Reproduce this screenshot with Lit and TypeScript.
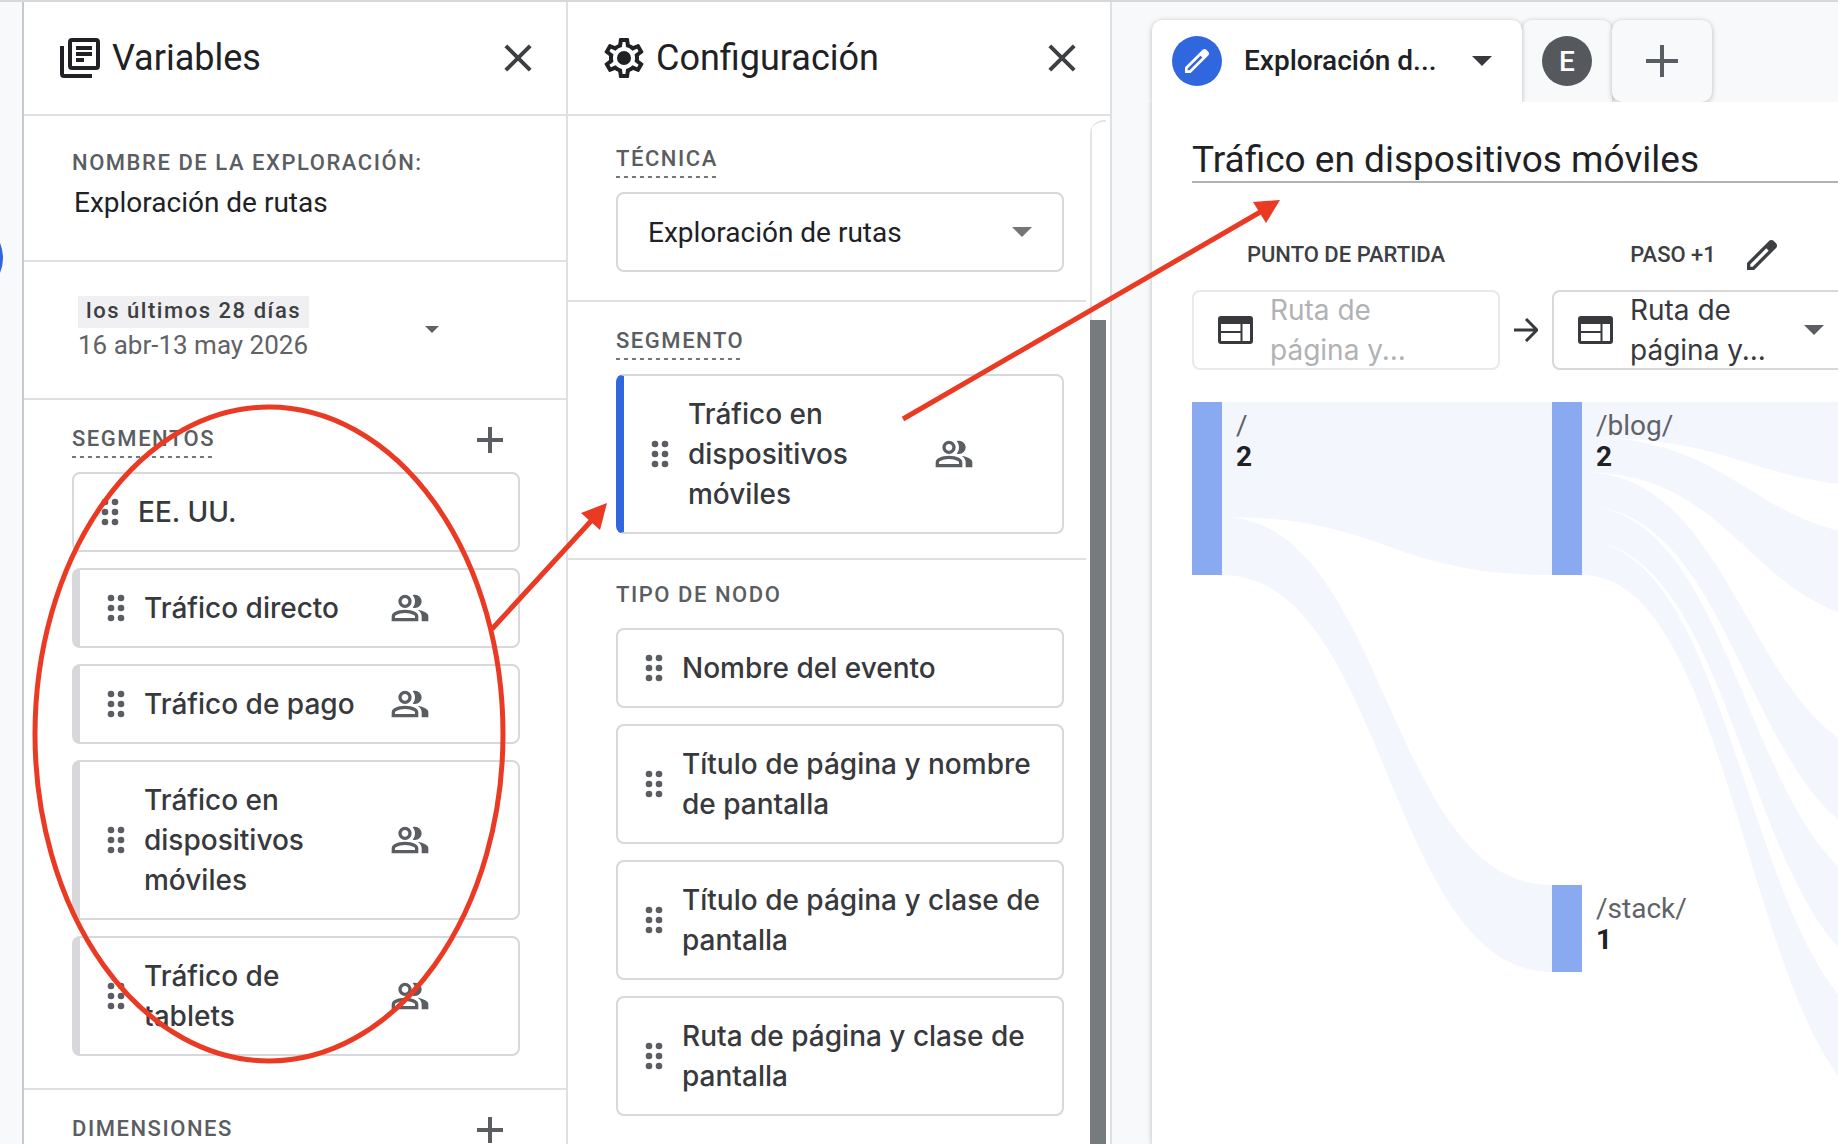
import { LitElement, html, svg, css, nothing, type TemplateResult } from "lit";
import { customElement } from "lit/decorators.js";
import { classMap } from "lit/directives/class-map.js";

interface Segment {
  name: string;
  audience: boolean;
}

interface SankeyNode {
  x: number;
  y: number;
  height: number;
  path: string;
  count: number;
}

/** One ribbon: horizontal span, then top and bottom edge at each end. */
interface SankeyLink {
  x0: number;
  x1: number;
  from: [number, number];
  to: [number, number];
}

const SEGMENTS: Segment[] = [
  { name: "EE. UU.", audience: false },
  { name: "Tráfico directo", audience: true },
  { name: "Tráfico de pago", audience: true },
  { name: "Tráfico en dispositivos móviles", audience: true },
  { name: "Tráfico de tablets", audience: true },
];

const NODE_TYPES = [
  "Nombre del evento",
  "Título de página y nombre de pantalla",
  "Título de página y clase de pantalla",
  "Ruta de página y clase de pantalla",
];

const NODES: SankeyNode[] = [
  { x: 0, y: 0, height: 173, path: "/", count: 2 },
  { x: 360, y: 0, height: 173, path: "/blog/", count: 2 },
  { x: 360, y: 483, height: 87, path: "/stack/", count: 1 },
];

const LINKS: SankeyLink[] = [
  { x0: 30, x1: 360, from: [0, 115], to: [0, 173] },
  { x0: 30, x1: 360, from: [115, 173], to: [483, 570] },
  { x0: 390, x1: 720, from: [0, 35], to: [0, 86] },
  { x0: 390, x1: 720, from: [35, 70], to: [137, 223] },
  { x0: 390, x1: 720, from: [70, 104], to: [360, 446] },
  { x0: 390, x1: 720, from: [104, 139], to: [497, 582] },
  { x0: 390, x1: 720, from: [139, 173], to: [633, 719] },
];

const ribbon = ({ x0, x1, from, to }: SankeyLink): string => {
  const mid = (x0 + x1) / 2;
  return (
    `M${x0} ${from[0]}C${mid} ${from[0]} ${mid} ${to[0]} ${x1} ${to[0]}` +
    `V${to[1]}C${mid} ${to[1]} ${mid} ${from[1]} ${x0} ${from[1]}Z`
  );
};

const libraryIcon = html`<svg class="icon48" viewBox="0 0 24 24" aria-hidden="true">
  <rect x="7" y="3" width="14" height="14" rx="1" fill="none" stroke="currentColor" stroke-width="2"></rect>
  <path d="M3 6V20a1 1 0 0 0 1 1H18" fill="none" stroke="currentColor" stroke-width="2"></path>
  <path d="M10 6h8v2h-8zM10 9h8v2h-8zM10 12h4v2h-4z"></path>
</svg>`;

const gearIcon = html`<svg class="icon48" viewBox="0 0 24 24" aria-hidden="true">
  <path
    d="M19.43 12.98c.04-.32.07-.64.07-.98 0-.34-.03-.66-.07-.98l2.11-1.65c.19-.15.24-.42.12-.64l-2-3.46c-.09-.16-.26-.25-.44-.25-.06 0-.12.01-.17.03l-2.49 1c-.52-.4-1.08-.73-1.69-.98l-.38-2.65C14.46 2.18 14.25 2 14 2h-4c-.25 0-.46.18-.49.42l-.38 2.65c-.61.25-1.17.59-1.69.98l-2.49-1c-.06-.02-.12-.03-.18-.03-.17 0-.34.09-.43.25l-2 3.46c-.13.22-.07.49.12.64l2.11 1.65c-.04.32-.07.65-.07.98 0 .33.03.66.07.98l-2.11 1.65c-.19.15-.24.42-.12.64l2 3.46c.09.16.26.25.44.25.06 0 .12-.01.17-.03l2.49-1c.52.4 1.08.73 1.69.98l.38 2.65c.03.24.24.42.49.42h4c.25 0 .46-.18.49-.42l.38-2.65c.61-.25 1.17-.59 1.69-.98l2.49 1c.06.02.12.03.18.03.17 0 .34-.09.43-.25l2-3.46c.12-.22.07-.49-.12-.64l-2.11-1.65zm-1.98-1.71c.04.31.05.52.05.73 0 .21-.02.43-.05.73l-.14 1.13.89.7 1.08.84-.7 1.21-1.27-.51-1.04-.42-.9.68c-.43.32-.84.56-1.25.73l-1.06.43-.16 1.13-.2 1.35h-1.4l-.19-1.35-.16-1.13-1.06-.43c-.43-.18-.83-.41-1.23-.71l-.91-.7-1.06.43-1.27.51-.7-1.21 1.08-.84.89-.7-.14-1.13c-.03-.31-.05-.54-.05-.74s.02-.43.05-.73l.14-1.13-.89-.7-1.08-.84.7-1.21 1.27.51 1.04.42.9-.68c.43-.32.84-.56 1.25-.73l1.06-.43.16-1.13.2-1.35h1.39l.19 1.35.16 1.13 1.06.43c.43.18.83.41 1.23.71l.91.7 1.06-.43 1.27-.51.7 1.21-1.07.85-.89.7.14 1.13z"
  ></path>
  <circle cx="12" cy="12" r="3.5"></circle>
</svg>`;

const closeIcon = html`<svg class="icon48" viewBox="0 0 24 24" aria-hidden="true">
  <path d="M5.9 5.9 18.1 18.1M18.1 5.9 5.9 18.1" fill="none" stroke="currentColor" stroke-width="2"></path>
</svg>`;

const plusIcon = html`<svg class="icon48" viewBox="0 0 48 48" aria-hidden="true">
  <path d="M24 11V37M11 24H37" fill="none" stroke="currentColor" stroke-width="4"></path>
</svg>`;

const plusLargeIcon = html`<svg class="icon48" viewBox="0 0 48 48" aria-hidden="true">
  <path d="M24 8V40M8 24H40" fill="none" stroke="currentColor" stroke-width="4"></path>
</svg>`;

const dragIcon = html`<svg class="icon40" viewBox="0 0 24 24" aria-hidden="true">
  ${[6, 12, 18].map(
    (y) => svg`<circle cx="9" cy=${y} r="2"></circle><circle cx="15" cy=${y} r="2"></circle>`,
  )}
</svg>`;

const peopleIcon = html`<svg class="icon40" viewBox="0 -960 960 960" aria-hidden="true">
  <path
    d="M40-160v-112q0-34 17.5-62.5T104-378q62-31 126-46.5T360-440q66 0 130 15.5T616-378q29 15 46.5 43.5T680-272v112H40Zm720 0v-120q0-44-24.5-84.5T666-434q51 6 96 20.5t84 35.5q36 20 55 44.5t19 53.5v120H760ZM360-480q-66 0-113-47t-47-113q0-66 47-113t113-47q66 0 113 47t47 113q0 66-47 113t-113 47Zm400-160q0 66-47 113t-113 47q-11 0-28-2.5t-28-5.5q27-32 41.5-71t14.5-81q0-42-14.5-81T544-792q14-5 28-6.5t28-1.5q66 0 113 47t47 113ZM120-240h480v-32q0-11-5.5-20T580-306q-54-27-109-40.5T360-360q-56 0-111 13.5T140-306q-9 5-14.5 14t-5.5 20v32Zm240-320q33 0 56.5-23.5T440-640q0-33-23.5-56.5T360-720q-33 0-56.5 23.5T280-640q0 33 23.5 56.5T360-560Z"
  ></path>
</svg>`;

const pencil = svg`<path d="M5 19h1.4l9.600-9.600-1.400-1.400L5 17.600zM3 21v-4.250L16.200 3.580q.3-.28.66-.43t.76-.15.780.15.650.45L20.430 5q.29.28.43.650T21 6.400q0 .4-.14.760t-.43.670L7.250 21z"></path>`;

const webIcon = html`<svg class="web-icon" viewBox="0 0 36 28" aria-hidden="true">
  <path
    fill-rule="evenodd"
    d="M3 0H32a3 3 0 0 1 3 3V25a3 3 0 0 1-3 3H3a3 3 0 0 1-3-3V3A3 3 0 0 1 3 0ZM3 8V15H22.500V8ZM3 17V25H22.500V17ZM24.500 8V25H32V8Z"
  ></path>
</svg>`;

const arrowIcon = html`<svg class="arrow" viewBox="0 0 24 24" aria-hidden="true">
  <path d="M0 12H22M12 1 23 12 12 23" fill="none" stroke="currentColor" stroke-width="3"></path>
</svg>`;

const caret = (size: "small" | "large"): TemplateResult => html`<svg
  class=${`caret ${size}`}
  viewBox="0 0 20 10"
  aria-hidden="true"
>
  <path d="M0 0H20L10 10Z"></path>
</svg>`;

@customElement("app-root")
export class AppRoot extends LitElement {
  static styles = css`
    :host {
      display: block;
      font-family: Roboto, "Liberation Sans", sans-serif;
      font-size: 28px;
      color: #202124;
    }
    * {
      box-sizing: border-box;
    }
    button,
    input,
    select {
      margin: 0;
      padding: 0;
      border: 0;
      background: none;
      font: inherit;
      color: inherit;
      text-align: left;
    }
    button {
      cursor: pointer;
    }
    svg {
      display: block;
      flex: none;
      fill: currentColor;
    }
    h2,
    h3,
    ul {
      margin: 0;
      padding: 0;
      font-weight: inherit;
      list-style: none;
    }
    .page {
      position: relative;
      display: flex;
      height: 100vh;
      overflow: hidden;
      border-top: 2px solid #d8d8dc;
      background: #f8f9fb;
    }
    .rail {
      display: flex;
      flex: none;
      width: 24px;
      padding-top: 217px;
      overflow: hidden;
      border-right: 2px solid #c8c9cd;
    }
    .rail-dot {
      flex: none;
      width: 78px;
      height: 78px;
      margin-left: -75px;
      border-radius: 50%;
      background: #3066de;
    }
    .column {
      display: flex;
      flex: none;
      flex-direction: column;
      width: 544px;
      border-right: 2px solid #e0e0e3;
      background: #fff;
    }
    .head {
      display: flex;
      flex: none;
      align-items: center;
      gap: 8px;
      height: 114px;
      padding: 0 24px 0 32px;
      border-bottom: 2px solid #e0e0e3;
    }
    .head h2 {
      flex: 1;
      font-size: 36px;
      line-height: 48px;
    }
    .icon48 {
      width: 48px;
      height: 48px;
    }
    .icon40 {
      width: 40px;
      height: 40px;
    }
    .close {
      color: #3c4043;
    }
    .section {
      padding: 22px 46px 32px 48px;
      border-bottom: 2px solid #e0e0e3;
    }
    .name-section {
      display: flex;
      flex-direction: column;
      padding-top: 30px;
      padding-bottom: 36px;
    }
    .label {
      color: #5a5d62;
      font-size: 22px;
      font-weight: 500;
      line-height: 34px;
      letter-spacing: 0.07em;
    }
    .name-input {
      height: 44px;
      padding-left: 2px;
    }
    .date {
      display: flex;
      align-items: center;
      width: 100%;
      padding: 34px 110px 36px 54px;
      border-bottom: 2px solid #e0e0e3;
      color: #5f6368;
    }
    .date-text {
      display: flex;
      flex: 1;
      flex-direction: column;
      align-items: flex-start;
      font-size: 26px;
      line-height: 34px;
    }
    .badge {
      padding: 0 8px 2px;
      background: #f0f0f2;
      color: #3c4043;
      font-size: 22px;
      font-weight: 500;
      line-height: 30px;
      letter-spacing: 0.07em;
    }
    .caret.small {
      width: 14px;
      height: 7px;
    }
    .caret.large {
      width: 20px;
      height: 10px;
    }
    .date .caret {
      margin-right: 17px;
    }
    .row {
      display: flex;
      align-items: center;
      justify-content: space-between;
      height: 36px;
      margin-bottom: 14px;
    }
    .row .label {
      height: 36px;
    }
    .dashed {
      background: repeating-linear-gradient(90deg, #74777c 0 4px, transparent 4px 8px) left bottom / 100% 2px
        no-repeat;
    }
    .add {
      margin-right: 6px;
      color: #5a5d62;
    }
    .cards {
      display: flex;
      flex-direction: column;
      gap: 16px;
    }
    .card {
      display: flex;
      align-items: center;
      gap: 8px;
      min-height: 80px;
      padding: 18px 16px;
      border: 2px solid #d7d7dc;
      border-radius: 8px;
      background: #fff;
      color: #5a5d62;
    }
    .card.audience {
      padding-right: 88px;
      border-left-width: 8px;
    }
    .card.selected {
      border-left-color: #3066de;
    }
    .card-name {
      flex: 1;
      color: #37393d;
      font-family: Inter, Roboto, sans-serif;
      font-weight: 500;
      line-height: 40px;
    }
    .card.audience .card-name {
      margin-right: 8px;
    }
    .scroll {
      display: flex;
      flex: 1;
      gap: 4px;
      min-height: 0;
      padding-right: 4px;
    }
    .settings {
      flex: 1;
      overflow: hidden;
    }
    .settings .section {
      padding-right: 22px;
    }
    .settings .technique {
      padding-top: 26px;
      padding-bottom: 28px;
    }
    .settings .segment {
      padding-bottom: 24px;
    }
    .settings .nodes {
      padding-top: 18px;
      border-bottom: 0;
    }
    .track {
      flex: none;
      width: 16px;
      margin-top: 4px;
      padding-top: 198px;
      border-top: 2px solid #e4e4e6;
      border-radius: 14px 0 0 0;
      background: linear-gradient(90deg, #e4e4e6 2px, transparent 2px);
    }
    .thumb {
      height: 100%;
      background: #767b7e;
    }
    .select {
      display: grid;
      align-items: center;
    }
    .select select {
      grid-area: 1 / 1;
      width: 100%;
      height: 80px;
      padding: 0 64px 0 30px;
      border: 2px solid #d7d7dc;
      border-radius: 8px;
      appearance: none;
    }
    .select .caret {
      grid-area: 1 / 1;
      justify-self: end;
      margin-right: 32px;
      color: #757575;
      pointer-events: none;
    }
    .canvas {
      display: flex;
      flex: 1;
      flex-direction: column;
      min-width: 0;
      padding: 18px 0 0 40px;
    }
    .tabs {
      display: flex;
      flex: none;
      height: 82px;
    }
    .tab {
      display: flex;
      align-items: center;
      justify-content: center;
      border-radius: 10px 10px 0 0;
      background: #f8f9fb;
      box-shadow: 0 1px 5px rgb(60 64 67 / 35%);
    }
    .tab.active {
      position: relative;
      justify-content: flex-start;
      width: 370px;
      padding: 0 30px 0 20px;
      background: #fff;
    }
    .tab.other {
      width: 90px;
    }
    .tab.new {
      width: 100px;
      border-radius: 10px;
      color: #5a5d62;
    }
    .disc {
      display: flex;
      flex: none;
      align-items: center;
      justify-content: center;
      width: 50px;
      height: 50px;
      border-radius: 50%;
      background: #55585d;
      color: #fff;
      font-weight: 500;
    }
    .disc.blue {
      background: #3066de;
    }
    .disc .pencil {
      width: 32px;
      height: 32px;
    }
    .tab-name {
      flex: 1;
      padding-left: 22px;
      font-weight: 500;
      line-height: 32px;
    }
    .tab .caret {
      color: #37393d;
    }
    .sheet-frame {
      position: relative;
      display: flex;
      flex: 1;
      min-height: 0;
      box-shadow: 0 1px 5px rgb(60 64 67 / 35%);
      clip-path: inset(0 0 0 -8px);
    }
    .sheet {
      flex: 1;
      min-width: 0;
      padding: 33px 0 0 40px;
      overflow: hidden;
      background: #fff;
    }
    .title {
      display: block;
      width: 100%;
      height: 48px;
      margin-bottom: 52px;
      padding-top: 2px;
      border-bottom: 2px solid #b2b2b4;
      font-size: 37px;
    }
    .steps {
      display: grid;
      grid-template-columns: 308px 52px 308px;
      align-items: center;
    }
    .step-head {
      display: flex;
      align-items: center;
      justify-content: center;
      gap: 26px;
      height: 40px;
      margin-bottom: 15px;
      color: #3c4043;
      font-size: 22px;
      font-weight: 500;
      line-height: 32px;
    }
    .step-head.next {
      grid-column: 3;
    }
    .dimension {
      display: flex;
      align-items: center;
      gap: 16px;
      height: 80px;
      padding: 0 34px 0 24px;
      border: 2px solid #d7d7dc;
      border-radius: 8px;
      color: #37393d;
    }
    .dimension.fixed {
      border-color: #e9e9eb;
      cursor: default;
    }
    .dimension-name {
      flex: 1;
      font-family: Inter, Roboto, sans-serif;
      line-height: 40px;
      white-space: nowrap;
    }
    .dimension.fixed .dimension-name {
      color: #b1b2b4;
    }
    .dimension .caret {
      color: #5a5d62;
    }
    .web-icon {
      width: 36px;
      height: 28px;
    }
    .arrow {
      width: 24px;
      height: 24px;
      color: #37393d;
      justify-self: center;
    }
    .sankey {
      width: 100%;
      height: 742px;
      margin-top: 32px;
      font-size: 28px;
    }
    .link {
      fill: #f3f6fd;
    }
    .node {
      fill: #89a9f0;
    }
    .node-path {
      fill: #5f6368;
    }
    .node-count {
      fill: #202124;
      font-weight: 700;
    }
    .marks {
      position: absolute;
      top: -2px;
      left: 0;
      width: 1838px;
      height: 1144px;
      pointer-events: none;
      color: #eb3a24;
    }
    .mark-line {
      fill: none;
      stroke: currentColor;
      stroke-width: 5px;
    }
  `;

  private card(name: string, audience: boolean, selected = false) {
    return html`<li class=${classMap({ card: true, audience, selected })}>
      ${dragIcon}
      <span class="card-name">${name}</span>
      ${audience ? peopleIcon : nothing}
    </li>`;
  }

  private variables() {
    return html`<section class="column" aria-label="Variables">
      <header class="head">
        ${libraryIcon}
        <h2>Variables</h2>
        <button class="close" aria-label="Cerrar variables">${closeIcon}</button>
      </header>
      <div class="section name-section">
        <label class="label" for="name">NOMBRE DE LA EXPLORACIÓN:</label>
        <input class="name-input" id="name" type="text" value="Exploración de rutas" />
      </div>
      <button class="date">
        <span class="date-text">
          <span class="badge">los últimos 28 días</span>
          <span>16 abr-13 may 2026</span>
        </span>
        ${caret("small")}
      </button>
      <div class="section">
        <div class="row">
          <h3 class="label dashed">SEGMENTOS</h3>
          <button class="add" aria-label="Añadir segmento">${plusIcon}</button>
        </div>
        <ul class="cards">
          ${SEGMENTS.map((s) => this.card(s.name, s.audience))}
        </ul>
      </div>
      <div class="section">
        <div class="row">
          <h3 class="label">DIMENSIONES</h3>
          <button class="add" aria-label="Añadir dimensión">${plusIcon}</button>
        </div>
      </div>
    </section>`;
  }

  private configuration() {
    return html`<section class="column" aria-label="Configuración">
      <header class="head">
        ${gearIcon}
        <h2>Configuración</h2>
        <button class="close" aria-label="Cerrar configuración">${closeIcon}</button>
      </header>
      <div class="scroll">
        <div class="settings">
          <div class="section technique">
            <div class="row"><label class="label dashed" for="technique">TÉCNICA</label></div>
            <div class="select">
              <select id="technique">
                <option>Exploración de rutas</option>
              </select>
              ${caret("large")}
            </div>
          </div>
          <div class="section segment">
            <div class="row"><h3 class="label dashed">SEGMENTO</h3></div>
            <ul class="cards">
              ${this.card("Tráfico en dispositivos móviles", true, true)}
            </ul>
          </div>
          <div class="section nodes">
            <div class="row"><h3 class="label">TIPO DE NODO</h3></div>
            <ul class="cards">
              ${NODE_TYPES.map((name) => this.card(name, false))}
            </ul>
          </div>
        </div>
        <div class="track"><div class="thumb"></div></div>
      </div>
    </section>`;
  }

  private sankey() {
    return html`<svg class="sankey" role="img" aria-label="Rutas">
      ${LINKS.map((link) => svg`<path class="link" d=${ribbon(link)}></path>`)}
      ${NODES.map(
        (n) => svg`<rect class="node" x=${n.x} y=${n.y} width="30" height=${n.height}></rect>
          <text class="node-path" x=${n.x + 44} y=${n.y + 33}>${n.path}</text>
          <text class="node-count" x=${n.x + 44} y=${n.y + 64}>${n.count}</text>`,
      )}
    </svg>`;
  }

  private canvas() {
    return html`<main class="canvas">
      <nav class="tabs">
        <button class="tab active">
          <span class="disc blue"><svg class="pencil" viewBox="0 0 24 24" aria-hidden="true">${pencil}</svg></span>
          <span class="tab-name">Exploración d...</span>
          ${caret("large")}
        </button>
        <button class="tab other"><span class="disc">E</span></button>
        <button class="tab new" aria-label="Nueva pestaña">${plusLargeIcon}</button>
      </nav>
      <div class="sheet-frame">
        <div class="sheet">
          <input class="title" type="text" aria-label="Título" value="Tráfico en dispositivos móviles" />
          <div class="steps">
            <div class="step-head">PUNTO DE PARTIDA</div>
            <div class="step-head next">
              PASO +1
              <svg class="icon40" viewBox="0 0 24 24" aria-hidden="true">${pencil}</svg>
            </div>
            <button class="dimension fixed" disabled>
              ${webIcon}<span class="dimension-name">Ruta de<br />página y...</span>
            </button>
            ${arrowIcon}
            <button class="dimension">
              ${webIcon}<span class="dimension-name">Ruta de<br />página y...</span>${caret("large")}
            </button>
          </div>
          ${this.sankey()}
        </div>
      </div>
    </main>`;
  }

  /** Hand-drawn callouts that lie over all three areas. */
  private marks() {
    return html`<svg class="marks" viewBox="0 0 1838 1144" aria-hidden="true">
      <ellipse class="mark-line" cx="269" cy="734" rx="234" ry="327"></ellipse>
      <path class="mark-line" d="M492 629 592 520M903 419 1262 211"></path>
      <path d="M607 503 600 530 581 513ZM1280 200 1266 223 1253 202Z"></path>
    </svg>`;
  }

  render() {
    return html`<div class="page">
      <div class="rail"><div class="rail-dot"></div></div>
      ${this.variables()} ${this.configuration()} ${this.canvas()} ${this.marks()}
    </div>`;
  }
}
